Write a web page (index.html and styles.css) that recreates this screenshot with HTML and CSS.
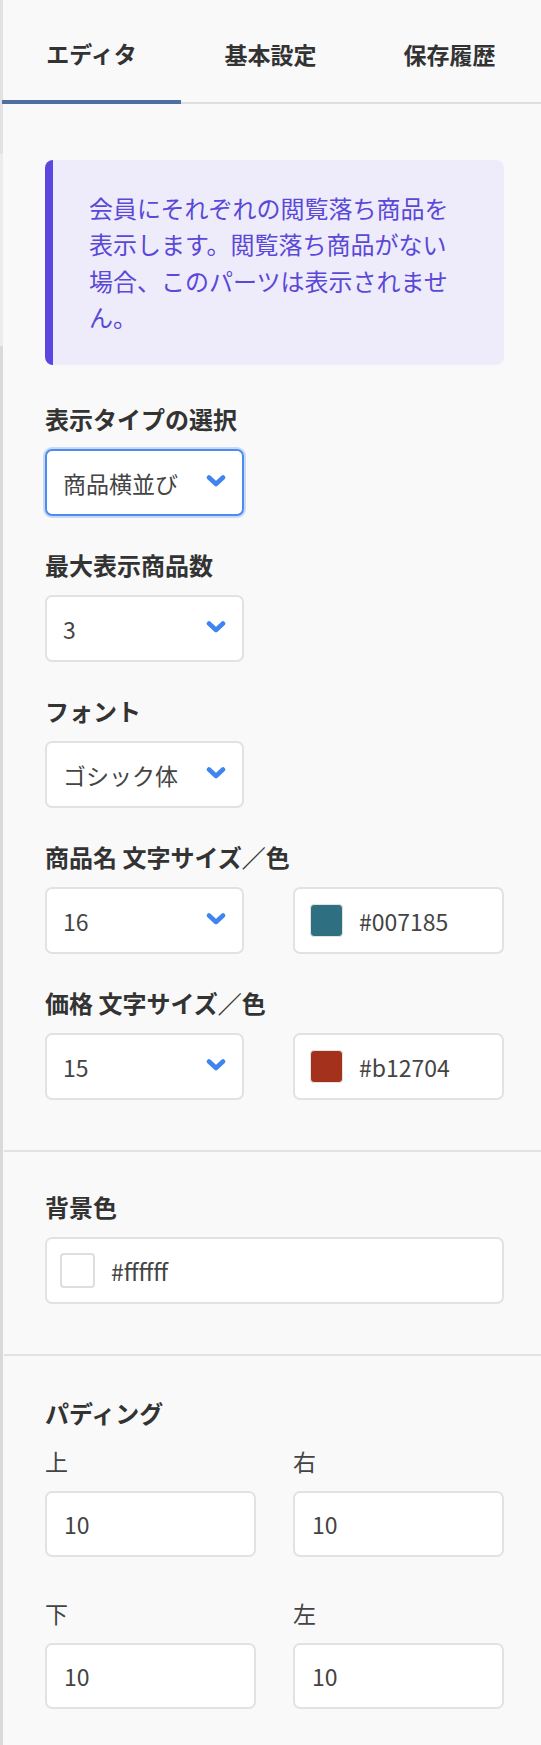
FILE: index.html
```html
<!DOCTYPE html>
<html lang="ja">
<head>
<meta charset="utf-8">
<title>エディタ</title>
<link rel="stylesheet" href="styles.css">
</head>
<body>
<div class="panel">
  <nav class="tabs">
    <div class="tab active">エディタ</div>
    <div class="tab">基本設定</div>
    <div class="tab">保存履歴</div>
  </nav>

  <section class="section first">
    <div class="notice">会員にそれぞれの閲覧落ち商品を表示します。閲覧落ち商品がない場合、このパーツは表示されません。</div>

    <div class="field">
      <div class="label">表示タイプの選択</div>
      <div class="select focus"><span>商品横並び</span><svg class="chev" viewBox="0 0 20 12"><path d="M3 2.5 L10 9 L17 2.5"/></svg></div>
    </div>

    <div class="field">
      <div class="label">最大表示商品数</div>
      <div class="select"><span>3</span><svg class="chev" viewBox="0 0 20 12"><path d="M3 2.5 L10 9 L17 2.5"/></svg></div>
    </div>

    <div class="field">
      <div class="label">フォント</div>
      <div class="select"><span>ゴシック体</span><svg class="chev" viewBox="0 0 20 12"><path d="M3 2.5 L10 9 L17 2.5"/></svg></div>
    </div>

    <div class="field">
      <div class="label">商品名 文字サイズ／色</div>
      <div class="row">
        <div class="select"><span>16</span><svg class="chev" viewBox="0 0 20 12"><path d="M3 2.5 L10 9 L17 2.5"/></svg></div>
        <div class="color"><span class="swatch teal"></span><span>#007185</span></div>
      </div>
    </div>

    <div class="field">
      <div class="label">価格 文字サイズ／色</div>
      <div class="row">
        <div class="select"><span>15</span><svg class="chev" viewBox="0 0 20 12"><path d="M3 2.5 L10 9 L17 2.5"/></svg></div>
        <div class="color"><span class="swatch rust"></span><span>#b12704</span></div>
      </div>
    </div>
  </section>

  <section class="section">
    <div class="field">
      <div class="label">背景色</div>
      <div class="color wide"><span class="swatch white"></span><span>#ffffff</span></div>
    </div>
  </section>

  <section class="section last">
    <div class="label">パディング</div>
    <div class="pad-grid">
      <div class="pad-item">
        <div class="sublabel">上</div>
        <div class="input">10</div>
      </div>
      <div class="pad-item">
        <div class="sublabel">右</div>
        <div class="input">10</div>
      </div>
      <div class="pad-item">
        <div class="sublabel">下</div>
        <div class="input">10</div>
      </div>
      <div class="pad-item">
        <div class="sublabel">左</div>
        <div class="input">10</div>
      </div>
    </div>
  </section>
</div>
</body>
</html>
```

FILE: styles.css
```css
* {
  box-sizing: border-box;
}

html, body {
  margin: 0;
  padding: 0;
  background: #f9f9f9;
}

body {
  font-family: "Noto Sans CJK JP", "Noto Sans", sans-serif;
  color: #333;
  text-spacing-trim: space-all;
}

.panel {
  min-height: 1745px;
  background-color: #f9f9f9;
  background-image: linear-gradient(to bottom, #e2e2e2 0, #e2e2e2 154px, #ececec 154px, #ececec 346px, #d8d9db 346px);
  background-size: 3px 100%;
  background-repeat: no-repeat;
  background-position: 0 0;
}

/* Tabs */
.tabs {
  display: flex;
  align-items: flex-start;
  height: 104px;
  margin-left: 2px;
  border-bottom: 2px solid #dedede;
}

.tab {
  width: 179px;
  height: 102px;
  display: flex;
  align-items: center;
  justify-content: center;
  padding-top: 6px;
  font-size: 23px;
  font-weight: 700;
  color: #333;
}

.tab.active {
  height: 104px;
  margin-bottom: -2px;
  border-bottom: 4px solid #4e70a0;
}

/* Sections */
.section {
  margin-left: 4px;
  padding: 38px 37px 50px 41px;
  border-bottom: 2px solid #e2e2e2;
  display: flex;
  flex-direction: column;
  gap: 32px;
}

.section.first {
  padding-top: 56px;
}

.section.last {
  border-bottom: none;
  padding-top: 40px;
  gap: 16px;
  padding-bottom: 30px;
}

.notice {
  background: #eeecfa;
  border-left: 8px solid #5b46e0;
  border-radius: 8px;
  padding: 30px 44px 30px 36px;
  color: #5a48d8;
  font-size: 24px;
  line-height: 36.3px;
  margin-bottom: 5px;
}

.field {
  display: flex;
  flex-direction: column;
  gap: 13px;
}

.label {
  font-size: 24px;
  line-height: 34px;
  font-weight: 700;
  color: #333;
}

.row {
  display: grid;
  grid-template-columns: 211px 211px;
  column-gap: 37px;
}

.select {
  width: 199px;
  height: 67px;
  background: #fff;
  border: 2px solid #e2e2e2;
  border-radius: 7px;
  display: flex;
  align-items: center;
  justify-content: space-between;
  padding: 0 16px 0 16px;
  font-size: 23px;
  color: #444;
}

.select.focus {
  border-color: #4c8ced;
  box-shadow: 0 0 0 2px rgba(76, 140, 237, 0.28);
}

.chev {
  width: 20px;
  height: 12px;
  margin-top: -4px;
  flex: none;
}

.chev path {
  fill: none;
  stroke: #3f84ef;
  stroke-width: 4.5;
  stroke-linecap: round;
  stroke-linejoin: round;
}

.color {
  height: 67px;
  background: #fff;
  border: 2px solid #e2e2e2;
  border-radius: 7px;
  display: flex;
  align-items: center;
  gap: 16px;
  padding: 0 15px;
  font-size: 23px;
  color: #444;
}

.color.wide {
  padding-left: 13px;
}

.swatch {
  width: 33px;
  height: 33px;
  border-radius: 4px;
  flex: none;
  border: 1.5px solid #e3e3e3;
}

.swatch.teal {
  background: #2f6f82;
}

.swatch.rust {
  background: #a3311c;
}

.swatch.white {
  width: 35px;
  height: 35px;
  background: #fff;
  border: 2px solid #dedede;
}

.pad-grid {
  display: grid;
  grid-template-columns: 211px 211px;
  column-gap: 37px;
  row-gap: 41px;
}

.pad-item {
  display: flex;
  flex-direction: column;
  gap: 15px;
}

.sublabel {
  font-size: 23px;
  line-height: 30px;
  color: #444;
}

.input {
  height: 66px;
  background: #fff;
  border: 2px solid #e2e2e2;
  border-radius: 7px;
  display: flex;
  align-items: center;
  padding: 0 17px;
  font-size: 23px;
  color: #444;
}
```
